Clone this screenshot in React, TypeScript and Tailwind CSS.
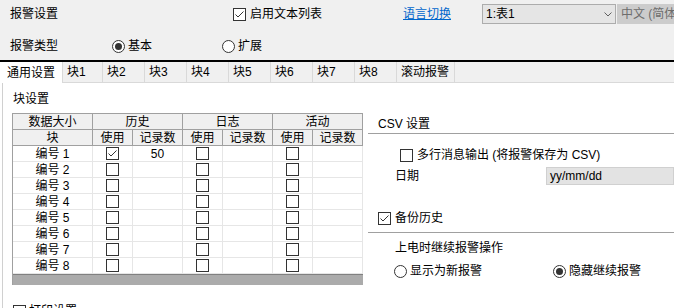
import React from "react";

const Check = ({ checked = false }: { checked?: boolean }) => (
  <span className="inline-flex w-[13px] h-[13px] shrink-0 items-center justify-center border border-[#333333] bg-white">
    {checked && (
      <svg width="11" height="11" viewBox="0 0 11 11">
        <path d="M1.5 5.5 L4 8 L9.5 2.5" fill="none" stroke="#333333" strokeWidth="1" />
      </svg>
    )}
  </span>
);

const Radio = ({ checked = false }: { checked?: boolean }) => (
  <span className="inline-flex w-[13px] h-[13px] shrink-0 items-center justify-center rounded-full border border-[#333333] bg-white">
    {checked && <span className="w-[7px] h-[7px] rounded-full bg-[#333333]" />}
  </span>
);

const tabs = [
  { name: "块1", w: "w-[40px]" },
  { name: "块2", w: "w-[42px]" },
  { name: "块3", w: "w-[42px]" },
  { name: "块4", w: "w-[42px]" },
  { name: "块5", w: "w-[42px]" },
  { name: "块6", w: "w-[42px]" },
  { name: "块7", w: "w-[42px]" },
  { name: "块8", w: "w-[42px]" },
  { name: "滚动报警", w: "w-[58px]" },
];

const rows = [1, 2, 3, 4, 5, 6, 7, 8];

export default function App() {
  return (
    <div
      className="w-[674px] h-[308px] overflow-hidden bg-white text-[12px] text-black leading-[16px]"
      style={{ fontFamily: '"Liberation Sans", "Noto Sans CJK SC", sans-serif' }}
    >
      {/* Top settings */}
      <div className="h-[60px] bg-[#f0f0f0] pt-[4px]">
        <div className="flex items-center h-[20px]">
          <div className="w-[233px] pl-[10px]">报警设置</div>
          <div className="w-[170px] flex items-center gap-[4px]">
            <Check checked />
            <span>启用文本列表</span>
          </div>
          <div className="w-[79px]">
            <span className="text-[#0066cc] underline">语言切换</span>
          </div>
          <div className="w-[134px] h-[20px] flex items-center justify-between border border-[#acacac] bg-[#e5e5e5] pl-[3px] pr-[3px]">
            <span>1:表1</span>
            <svg width="8" height="5" viewBox="0 0 8 5">
              <path d="M0.5 0.5 L4 4 L7.5 0.5" fill="none" stroke="#606060" strokeWidth="1" />
            </svg>
          </div>
          <div className="ml-[1px] flex-1 h-[20px] flex items-center bg-[#cccccc] pl-[4px] text-[#6d6d6d] whitespace-nowrap overflow-hidden">
            中文 (简体中文)
          </div>
        </div>
        <div className="flex items-center h-[20px] mt-[12px]">
          <div className="w-[112px] pl-[10px]">报警类型</div>
          <div className="w-[110px] flex items-center gap-[3px]">
            <Radio checked />
            <span>基本</span>
          </div>
          <div className="flex items-center gap-[3px]">
            <Radio />
            <span>扩展</span>
          </div>
        </div>
      </div>
      <div className="h-[2px] bg-black" />

      {/* Tabs */}
      <div className="flex h-[21px] bg-[#f0f0f0]">
        <div className="w-[63px] bg-white pl-[7px] flex items-center border-r border-[#d9d9d9]">通用设置</div>
        {tabs.map((t) => (
          <div key={t.name} className={`${t.w} pl-[4px] flex items-center border-r border-b border-[#d9d9d9]`}>
            {t.name}
          </div>
        ))}
        <div className="flex-1 border-b border-[#d9d9d9]" />
      </div>

      {/* Content */}
      <div className="flex ml-[2px] border-l border-[#d0d0d0] h-[225px]">
        {/* Left: block settings */}
        <div className="w-[365px] pl-[9px] pt-[8px]">
          <div className="ml-[1px] h-[16px]">块设置</div>
          <div className="mt-[6px] w-[351px] border-l border-t border-[#a0a0a0]">
            <div className="flex h-[16px] bg-[#f0f0f0] border-b border-[#a0a0a0]">
              <div className="w-[80px] text-center border-r border-[#a0a0a0]">数据大小</div>
              <div className="w-[90px] text-center border-r border-[#a0a0a0]">历史</div>
              <div className="w-[90px] text-center border-r border-[#a0a0a0]">日志</div>
              <div className="w-[90px] text-center border-r border-[#a0a0a0]">活动</div>
            </div>
            <div className="flex h-[16px] bg-[#f0f0f0] border-b border-[#a0a0a0]">
              <div className="w-[80px] text-center border-r border-[#a0a0a0]">块</div>
              <div className="w-[40px] text-center border-r border-[#a0a0a0]">使用</div>
              <div className="w-[50px] text-center border-r border-[#a0a0a0]">记录数</div>
              <div className="w-[40px] text-center border-r border-[#a0a0a0]">使用</div>
              <div className="w-[50px] text-center border-r border-[#a0a0a0]">记录数</div>
              <div className="w-[40px] text-center border-r border-[#a0a0a0]">使用</div>
              <div className="w-[50px] text-center border-r border-[#a0a0a0]">记录数</div>
            </div>
            {rows.map((n) => (
              <div key={n} className="flex h-[16px] border-b border-[#e6e6e6]">
                <div className="w-[80px] text-center border-r border-[#e6e6e6]">编号 {n}</div>
                <div className="w-[40px] flex items-center justify-center border-r border-[#e6e6e6]">
                  <Check checked={n === 1} />
                </div>
                <div className="w-[50px] text-center border-r border-[#e6e6e6]">{n === 1 ? "50" : ""}</div>
                <div className="w-[40px] flex items-center justify-center border-r border-[#e6e6e6]">
                  <Check />
                </div>
                <div className="w-[50px] border-r border-[#e6e6e6]" />
                <div className="w-[40px] flex items-center justify-center border-r border-[#e6e6e6]">
                  <Check />
                </div>
                <div className="w-[50px] border-r border-[#e6e6e6]" />
              </div>
            ))}
            <div className="h-[11px] bg-[#ababab] border-t border-[#808080]" />
          </div>
          <div className="mt-[18px] ml-[1px] flex items-center gap-[3px]">
            <Check />
            <span>打印设置</span>
          </div>
        </div>

        {/* Right: CSV / backup */}
        <div className="flex-1 pt-[33px]">
          <div className="border-b border-[#a0a0a0] pb-[1px]">
            <div className="pl-[10px] h-[16px]">CSV 设置</div>
          </div>
          <div className="mt-[13px] pl-[32px] flex items-center gap-[4px] h-[16px]">
            <Check />
            <span>多行消息输出 (将报警保存为 CSV)</span>
          </div>
          <div className="mt-[4px] flex items-center h-[18px]">
            <div className="w-[178px] pl-[27px]">日期</div>
            <div className="flex-1 h-[18px] bg-[#e3e3e3] border border-[#d0d0d0] pl-[3px] flex items-center">yy/mm/dd</div>
          </div>
          <div className="mt-[25px] border-b border-[#a0a0a0] pb-[6px]">
            <div className="pl-[10px] flex items-center gap-[4px] h-[16px]">
              <Check checked />
              <span>备份历史</span>
            </div>
          </div>
          <div className="mt-[7px] pl-[27px] h-[16px]">上电时继续报警操作</div>
          <div className="mt-[7px] flex items-center h-[16px] pl-[26px]">
            <div className="w-[159px] flex items-center gap-[3px]">
              <Radio />
              <span>显示为新报警</span>
            </div>
            <div className="flex items-center gap-[3px]">
              <Radio checked />
              <span>隐藏继续报警</span>
            </div>
          </div>
        </div>
      </div>
    </div>
  );
}
